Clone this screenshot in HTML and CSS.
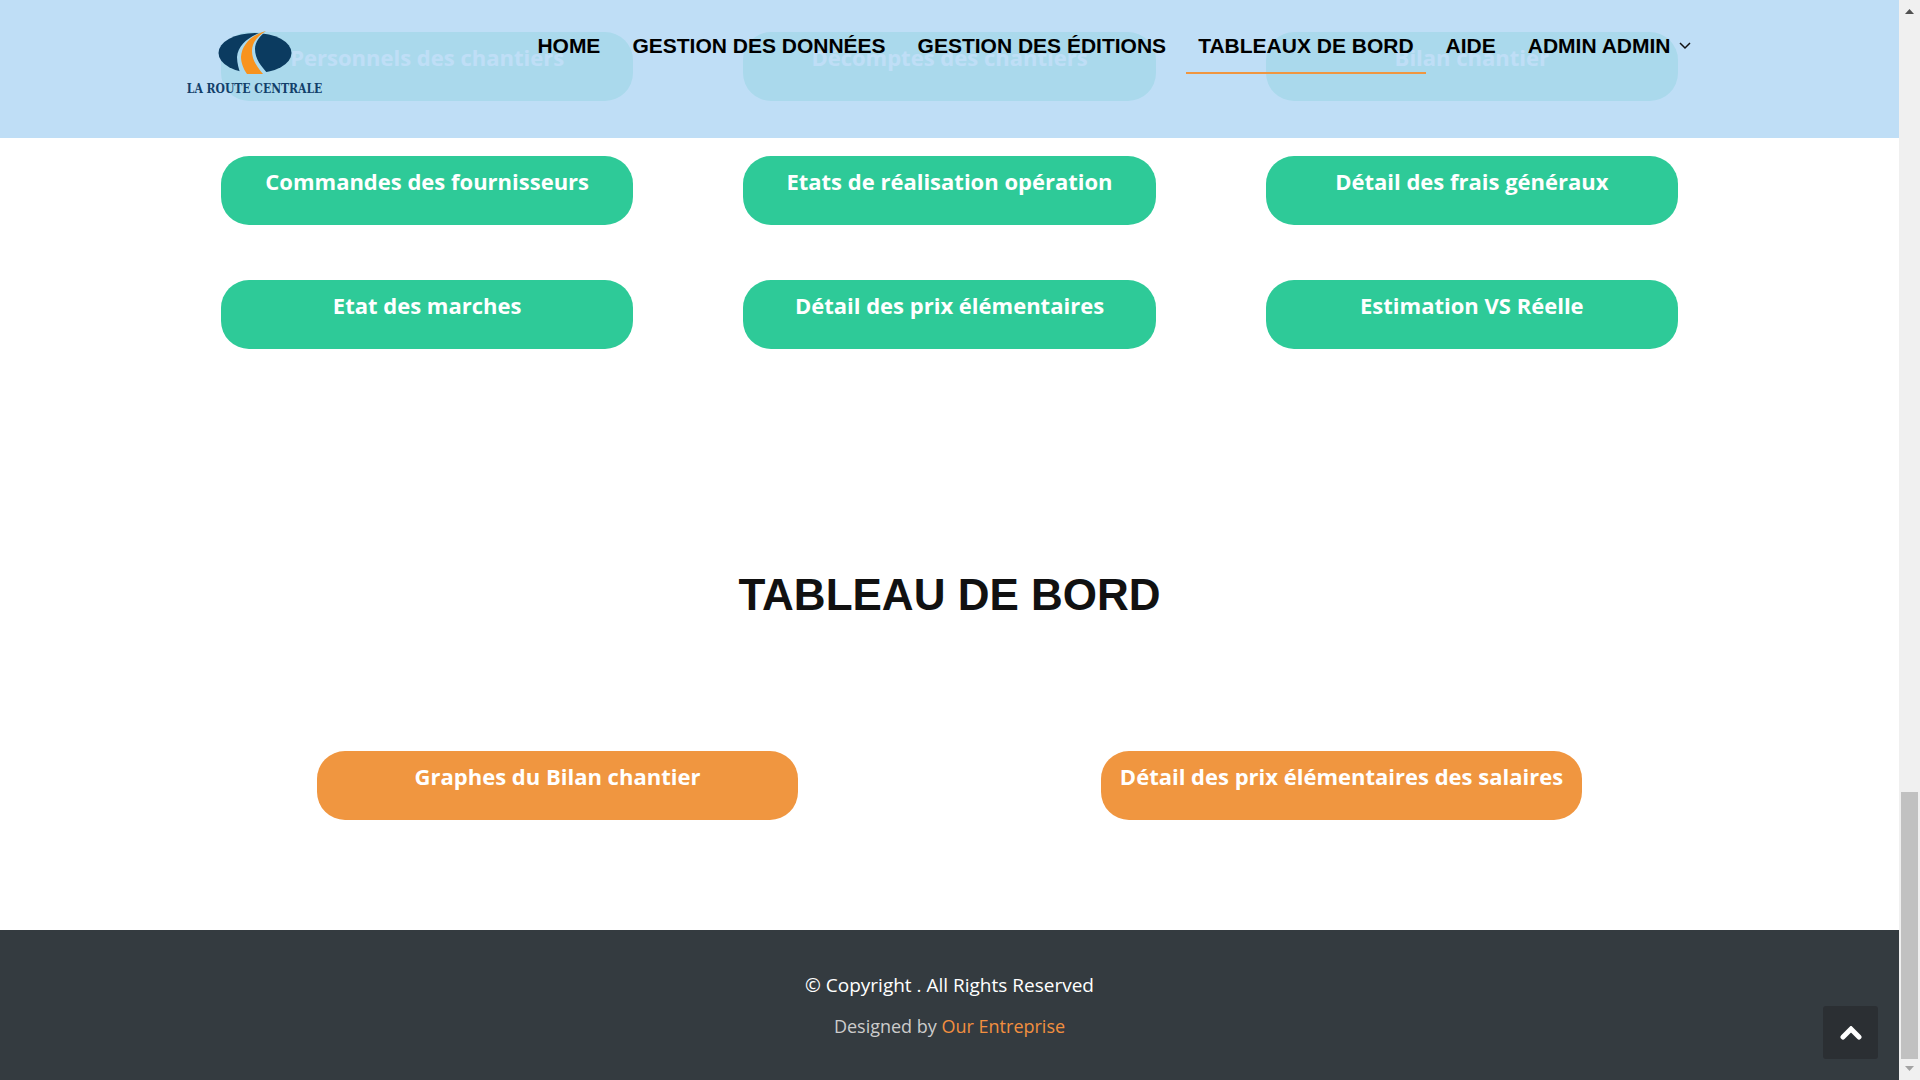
FILE: index.html
```html
<!DOCTYPE html>
<html lang="fr">
<head>
<meta charset="utf-8">
<meta name="viewport" content="width=device-width, initial-scale=1">
<title>La Route Centrale</title>
<link rel="stylesheet" href="styles.css">
</head>
<body>
<div class="page">
  <header class="header">
    <div class="header-inner">
      <a class="logo" href="#home">
        <svg class="logo-mark" width="74" height="44" viewBox="0 0 74 44" aria-hidden="true">
          <ellipse cx="37" cy="22" rx="36.500" ry="20" fill="#0b3b60"/>
          <path d="M48 0C35 3 20 12 19 26c0 6 2 13 4 18h28C43 35 37 28 37 18c0-7 5-13 11-18z" fill="#a9d9ef"/>
          <path d="M48 0C34 4 24 13 23 26c0 6 3 13 6 17h16C38 35 34 28 34 20 34 11 40 5 48 0z" fill="#f8931f"/>
        </svg>
        <span class="logo-name">LA ROUTE CENTRALE</span>
      </a>
      <nav class="nav">
        <a class="nav-link" href="#home">HOME</a>
        <a class="nav-link" href="#donnees">GESTION DES DONNÉES</a>
        <a class="nav-link" href="#editions">GESTION DES ÉDITIONS</a>
        <a class="nav-link nav-link-active" href="#tableaux">TABLEAUX DE BORD</a>
        <a class="nav-link" href="#aide">AIDE</a>
        <a class="nav-link" href="#admin">ADMIN ADMIN
          <svg width="12" height="8" viewBox="0 0 12 8" aria-hidden="true"><path d="M1 1l5 5 5-5" fill="none" stroke="#111" stroke-width="1.500"/></svg>
        </a>
      </nav>
    </div>
  </header>

  <main>
    <section class="editions" id="editions">
      <a class="card" href="#personnels">Personnels des chantiers</a>
      <a class="card" href="#decomptes">Décomptes des chantiers</a>
      <a class="card" href="#bilan">Bilan chantier</a>
      <a class="card" href="#commandes">Commandes des fournisseurs</a>
      <a class="card" href="#etats">Etats de réalisation opération</a>
      <a class="card" href="#frais">Détail des frais généraux</a>
      <a class="card" href="#marches">Etat des marches</a>
      <a class="card" href="#prix">Détail des prix élémentaires</a>
      <a class="card" href="#estimation">Estimation VS Réelle</a>
    </section>
    <section class="boards" id="tableaux">
      <h2 class="title">TABLEAU DE BORD</h2>
      <div class="boards-grid">
        <a class="card card-orange" href="#graphes">Graphes du Bilan chantier</a>
        <a class="card card-orange" href="#salaires">Détail des prix élémentaires des salaires</a>
      </div>
    </section>
  </main>

  <footer class="footer">
    <p class="copyright">© Copyright . All Rights Reserved</p>
    <p class="credits">Designed by <a href="#entreprise">Our Entreprise</a></p>
  </footer>
  <button class="back-to-top" type="button" aria-label="Haut de page">
    <svg width="22" height="14" viewBox="0 0 22 14" aria-hidden="true"><path d="M3 11l8-8 8 8" fill="none" stroke="#fff" stroke-width="5" stroke-linecap="round"/></svg>
  </button>
</div>
<div class="scrollbar" aria-hidden="true">
  <svg width="21" height="21" viewBox="0 0 21 21"><path d="M6 14l4.500-5 4.500 5z" fill="#505050"/></svg>
  <div class="thumb"></div>
  <svg width="21" height="21" viewBox="0 0 21 21"><path d="M6 7l4.500 5L15 7z" fill="#a3a3a3"/></svg>
</div>
</body>
</html>
```
FILE: styles.css
```css
* { box-sizing: border-box; }

body {
  margin: 0;
  display: flex;
  min-height: 100vh;
  background: #fff;
  font-family: "Open Sans", sans-serif;
}

a { text-decoration: none; }

.page {
  flex: 1;
  min-width: 0;
  display: flex;
  flex-direction: column;
  position: relative;
}

main { flex: 1; }

.header {
  position: absolute;
  inset: 0 0 auto;
  z-index: 2;
  padding: 31px 24px 0;
  min-height: 138px;
  background: rgba(184, 218, 245, 0.9);
}

.header-inner {
  display: flex;
  align-items: flex-start;
  justify-content: space-between;
  max-width: 1526px;
  padding-right: 10px;
  margin: 0 auto;
}

.logo {
  display: flex;
  flex-direction: column;
  align-items: center;
  gap: 7px;
  min-width: 136px;
}

.logo-name {
  font: bold 12px/14px "DejaVu Serif Condensed", "Liberation Serif", serif;
  color: #12406a;
  white-space: nowrap;
}

.nav {
  display: flex;
  gap: 8px;
}

.nav-link {
  display: flex;
  align-items: center;
  gap: 8px;
  padding: 0 12px 11px;
  border-bottom: 2px solid transparent;
  font: bold 21px/30px "Liberation Sans", sans-serif;
  color: #000;
  white-space: nowrap;
}

.nav-link-active { border-color: #f09640; }

.editions {
  display: grid;
  grid-template-columns: repeat(3, 1fr);
  gap: 55px 110px;
  max-width: 1457px;
  margin: 0 auto;
  padding-top: 32px;
}

.card {
  padding: 8px 8px 27px;
  border-radius: 28px;
  background: #2eca98;
  color: #fff;
  font-size: 22px;
  font-weight: 700;
  line-height: 34px;
  text-align: center;
}

.card-orange { background: #f09640; }

.boards { padding: 219px 0 110px; }

.title {
  margin: 0 0 129px;
  font: bold 44px/54px "Liberation Sans", sans-serif;
  color: #111;
  text-align: center;
}

.boards-grid {
  display: grid;
  grid-template-columns: 1fr 1fr;
  gap: 303px;
  max-width: 1265px;
  margin: 0 auto;
}

.footer {
  padding: 40px 24px;
  background: #343b40;
  text-align: center;
}

.copyright {
  margin: 0 0 12px;
  font-size: 19px;
  line-height: 30px;
  color: #fff;
}

.credits {
  margin: 0;
  font-size: 18px;
  line-height: 28px;
  color: #ccc;
}

.credits a { color: #f28f3f; }

.back-to-top {
  position: absolute;
  right: 21px;
  bottom: 21px;
  display: flex;
  align-items: center;
  justify-content: center;
  width: 55px;
  height: 53px;
  padding: 0;
  border: 0;
  border-radius: 3px;
  background: #2b2f33;
}

.scrollbar {
  position: sticky;
  top: 0;
  display: flex;
  flex-direction: column;
  width: 21px;
  height: 100vh;
  background: #f0f0f0;
}

.thumb {
  height: 267px;
  margin: auto 2px 0;
  background: #c1c1c1;
}
```
